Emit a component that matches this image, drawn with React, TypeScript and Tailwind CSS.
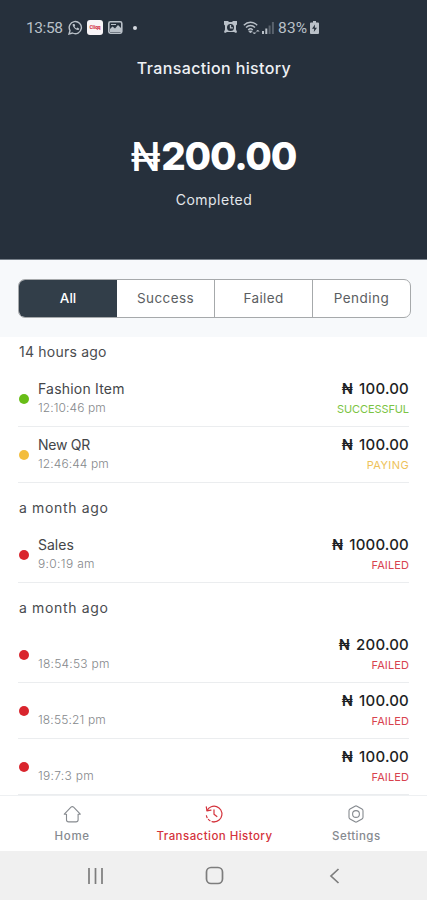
import React from "react";

type Tx = {
  title: string;
  time: string;
  timeClass: string;
  amount: string;
  status: string;
  dot: string;
  color: string;
  statusClass: string;
  titleClass?: string;
};

const FAILED = {
  status: "FAILED",
  dot: "bg-[#d9252d]",
  color: "text-[#d8434e]",
  statusClass: "tracking-[0.1px]",
};

const groups: { label: string; labelClass: string; height: string; items: Tx[] }[] = [
  {
    label: "14 hours ago",
    labelClass: "tracking-[0.22px]",
    height: "h-[34px] pt-[5px]",
    items: [
      { title: "Fashion Item", titleClass: "tracking-[0.2px]", time: "12:10:46 pm", timeClass: "tracking-[0.1px]", amount: "100.00", status: "SUCCESSFUL", dot: "bg-[#68bd17]", color: "text-[#7bc443]", statusClass: "tracking-[-0.1px]" },
      { title: "New QR", titleClass: "tracking-[-0.25px]", time: "12:46:44 pm", timeClass: "tracking-[0.1px]", amount: "100.00", status: "PAYING", dot: "bg-[#f3bd3c]", color: "text-[#eec25a]", statusClass: "tracking-[0.4px]" },
    ],
  },
  {
    label: "a month ago",
    labelClass: "tracking-[0.65px]",
    height: "h-[44.4px] pt-[15px]",
    items: [
      { title: "Sales", titleClass: "tracking-[0px]", time: "9:0:19 am", timeClass: "tracking-[0.35px]", amount: "1000.00", ...FAILED },
    ],
  },
  {
    label: "a month ago",
    labelClass: "tracking-[0.65px]",
    height: "h-[44.4px] pt-[15px]",
    items: [
      { title: "", time: "18:54:53 pm", timeClass: "tracking-[0.25px]", amount: "200.00", ...FAILED },
      { title: "", time: "18:55:21 pm", timeClass: "tracking-[0.15px]", amount: "100.00", ...FAILED },
      { title: "", time: "19:7:3 pm", timeClass: "tracking-[0.3px]", amount: "100.00", ...FAILED },
    ],
  },
];

function StatusBar() {
  return (
    <div className="flex h-[54px] items-center pl-[26px] pt-[1px] text-[#b9c0c8]">
      <span className="w-[38px] whitespace-nowrap font-['Roboto',sans-serif] text-[15.5px] leading-5 tracking-[-0.4px]">13:58</span>
      <svg className="ml-[4px] size-[15px]" viewBox="0 0 15 15" fill="none" stroke="currentColor" strokeWidth="1.4">
        <path d="M1 14l1-3.4A6.1 6.1 0 1 1 4.5 13z" />
        <path d="M4.900 4c-1.400 1.600 2.900 7 5.600 5.900.9-.5.9-1.200.5-1.500l-1.600-.8-.9.9C7.500 7.900 6.900 7.200 6.600 6.400l.6-.9-.7-1.600z" fill="currentColor" stroke="none" />
      </svg>
      <span className="ml-[4px] flex h-[15px] w-[16px] items-center justify-center rounded-[3px] bg-[#f8f5f8] font-['Roboto',sans-serif] text-[5px] font-black tracking-[-0.1px] text-[#d33b4e]">Cliqq</span>
      <svg className="ml-[5px] h-[13px] w-[15px]" viewBox="0 0 15 13">
        <rect x=".8" y=".8" width="13" height="11.400" rx="1.600" fill="none" stroke="currentColor" strokeWidth="1.600" />
        <path d="M2 11V8l2.500-2.500 2.500 2L10 4l3 3v4z" fill="currentColor" />
        <path d="M3 3h5v1H3z" fill="currentColor" />
      </svg>
      <span className="ml-[10px] size-[4px] rounded-full bg-[#d5d9df]" />
      <svg className="ml-[87px] size-[13px]" viewBox="0 0 13 13">
        <path d="M0 0h4l1 1h3l1-1h4v3.500l-1 1v4l1 2.500-1 1-2-1H3l-2 1-1-1 1-2.500v-4l-1-1z" fill="currentColor" />
        <circle cx="6.500" cy="6.500" r="3.500" fill="#26303c" />
        <path d="M6.500 4v2.900h2.400" fill="none" stroke="currentColor" strokeWidth="1.300" />
      </svg>
      <svg className="ml-[6px] h-[14px] w-[17px]" viewBox="0 0 17 14" fill="none" stroke="currentColor" strokeWidth="1.400">
        <path d="M.8 4.200C4.800.2 10.200.2 14.200 4.200M3 6.600c2.700-2.800 6.300-2.800 9 0M5.200 8.900c1.500-1.500 3.100-1.500 4.600 0" />
        <path d="M5.800 10h3.400l-1.700 2zM10 11.500l1.400 1.500 1.400-1.500M13.400 10.500l1.300-1.500 1.300 1.500" fill="currentColor" strokeWidth=".8" />
      </svg>
      <svg className="ml-[2px] h-[12px] w-[12px]" viewBox="0 0 12 12" fill="currentColor">
        <path d="M0 9h2v3H0zM3.300 6.500h2V12h-2z" />
        <path d="M6.600 3.500h2V12h-2zM9.900 0h2v12h-2z" opacity=".35" />
      </svg>
      <span className="ml-[4px] w-[32px] whitespace-nowrap font-['Roboto',sans-serif] text-[15.5px] leading-5 tracking-[0.2px]">83%</span>
      <svg className="h-[13px] w-[9px]" viewBox="0 0 9 13">
        <path d="M3 0h3v1.500h2a1 1 0 0 1 1 1V12a1 1 0 0 1-1 1H1a1 1 0 0 1-1-1V2.500a1 1 0 0 1 1-1h2z" fill="currentColor" />
        <path d="M5 3.500L2 7.700h2.200L3.800 11 7 6.800H4.800z" fill="#26303c" />
      </svg>
    </div>
  );
}

function Row({ tx }: { tx: Tx }) {
  return (
    <div className="flex h-[55.8px] items-start border-b border-[#ebedef] pl-px">
      <span className={`mt-[23px] size-[10px] shrink-0 rounded-full ${tx.dot}`} />
      <div className="ml-[9px] flex flex-1 flex-col pt-[8px]">
        <span className={`h-[20px] text-[14px] leading-5 text-[#444649] ${tx.titleClass ?? ""}`}>{tx.title}</span>
        <span className={`text-[12px] font-light leading-[18px] text-[#85888b] ${tx.timeClass}`}>{tx.time}</span>
      </div>
      <div className="flex flex-col items-end pt-[7px]">
        <span className="flex text-[15px] font-medium leading-[21px] tracking-[0.2px] text-[#1d1f24]">
          <span className="mr-[6px] text-[14.5px] font-semibold">₦</span>
          {tx.amount}
        </span>
        <span className={`text-[11px] leading-[20px] ${tx.color} ${tx.statusClass}`}>{tx.status}</span>
      </div>
    </div>
  );
}

function Tabs() {
  return (
    <div className="h-[77px] shrink-0 bg-[#f7f9fb] pl-[18px] pr-[16px] pt-[19px]">
      <div className="grid h-[39px] grid-cols-[98px_98px_98px_1fr] overflow-hidden rounded-[7px] border border-[#a6a9ab] bg-white text-[13.5px] text-[#5b5e62]">
        <span className="flex items-center justify-center bg-[#323e49] pb-px font-medium text-white">All</span>
        <span className="flex items-center justify-center border-r border-[#a6a9ab] pb-px tracking-[0.4px]">Success</span>
        <span className="flex items-center justify-center border-r border-[#a6a9ab] pb-px tracking-[0.35px]">Failed</span>
        <span className="flex items-center justify-center pb-px tracking-[0.5px]">Pending</span>
      </div>
    </div>
  );
}

function BottomNav() {
  return (
    <div className="h-[56px] shrink-0 border-t border-[#eef0f2] bg-white text-[11.5px] font-medium text-[#868a8f]">
      <div className="grid h-full grid-cols-3">
        <div className="flex flex-col items-center pl-[2px] pt-[9px]">
          <svg className="size-[18px]" viewBox="0 0 18 18" fill="none" stroke="currentColor" strokeWidth="1.100" strokeLinejoin="round" strokeLinecap="round">
            <path d="M1.300 9.200L8 2.200a1.900 1.900 0 0 1 2.600 0l6.700 7h-2.200v5.500a2.200 2.200 0 0 1-2.200 2.200H5.700a2.200 2.200 0 0 1-2.200-2.200V9.200z" />
          </svg>
          <span className="mt-[4px] leading-[18px] tracking-[0.7px]">Home</span>
        </div>
        <div className="flex flex-col items-center pl-[2px] pt-[9px] text-[#d4333c]">
          <svg className="size-[18px]" viewBox="0 0 18 18" fill="none" stroke="currentColor" strokeWidth="1.200" strokeLinecap="round" strokeLinejoin="round">
            <path d="M2.200 5.400A7.800 7.800 0 1 1 9 16.800" />
            <path d="M9 16.800A7.800 7.800 0 0 1 1.200 9" strokeDasharray="2 2.200" />
            <path d="M1.300 1.800l.7 4 4-.6" />
            <path d="M9 4.800V9.200l2.900 2.300" />
          </svg>
          <span className="mt-[4px] whitespace-nowrap leading-[18px] tracking-[0.45px]">Transaction History</span>
        </div>
        <div className="flex flex-col items-center pl-px pt-[9px]">
          <svg className="size-[18px]" viewBox="0 0 18 18" fill="none" stroke="currentColor" strokeWidth="1.100" strokeLinejoin="round">
            <path d="M8 1.200a2 2 0 0 1 2 0l5 2.900a2 2 0 0 1 1 1.700v6.400a2 2 0 0 1-1 1.700l-5 2.900a2 2 0 0 1-2 0l-5-2.900a2 2 0 0 1-1-1.700V5.800a2 2 0 0 1 1-1.700z" />
            <circle cx="9" cy="9" r="3.400" />
          </svg>
          <span className="mt-[4px] leading-[18px] tracking-[0.45px]">Settings</span>
        </div>
      </div>
    </div>
  );
}

export default function App() {
  return (
    <div className="flex h-[900px] w-[427px] flex-col overflow-hidden bg-white font-['Inter',sans-serif]">
      <header className="h-[260px] shrink-0 border-b border-[#77808a] bg-[#26303c] text-white">
        <StatusBar />
        <div className="flex h-[28px] items-center justify-center pl-px text-[16px] font-medium tracking-[0.38px] text-[#eef1f5]">Transaction history</div>
        <div className="mt-[47px] flex h-[54px] items-center justify-center text-[38.5px] leading-none">
          <span className="text-[39px] font-medium tracking-[0.5px]">₦</span>
          <span className="font-extrabold tracking-[-1.2px]">200.00</span>
        </div>
        <div className="mt-[6px] flex h-[20px] items-center justify-center pl-px text-[14px] tracking-[0.5px] text-[#e3e7eb]">Completed</div>
      </header>
      <Tabs />
      <main className="min-h-0 flex-1 overflow-hidden pl-[18px] pr-[18px]">
        {groups.map((g, i) => (
          <section key={i}>
            <h2 className={`${g.height} pl-px text-[14px] leading-5 text-[#4a4c4f] ${g.labelClass}`}>{g.label}</h2>
            {g.items.map((tx, j) => (
              <Row key={j} tx={tx} />
            ))}
          </section>
        ))}
      </main>
      <BottomNav />
      <div className="flex h-[49px] shrink-0 items-center bg-[#f0f0f0] text-[#7d7d7d]">
        <svg className="ml-[87px] h-[16px] w-[17px]" viewBox="0 0 17 16" stroke="currentColor" strokeWidth="1.700">
          <path d="M2 0v16M8.500 0v16M15 0v16" />
        </svg>
        <svg className="ml-[101px] size-[19px]" viewBox="0 0 19 19" fill="none" stroke="currentColor" strokeWidth="1.700">
          <rect x="1.500" y="1.500" width="16" height="16" rx="4.500" />
        </svg>
        <svg className="ml-[105px] h-[16px] w-[11px]" viewBox="0 0 11 16" fill="none" stroke="currentColor" strokeWidth="1.700">
          <path d="M9.500 1L2 8l7.500 7" />
        </svg>
      </div>
    </div>
  );
}
